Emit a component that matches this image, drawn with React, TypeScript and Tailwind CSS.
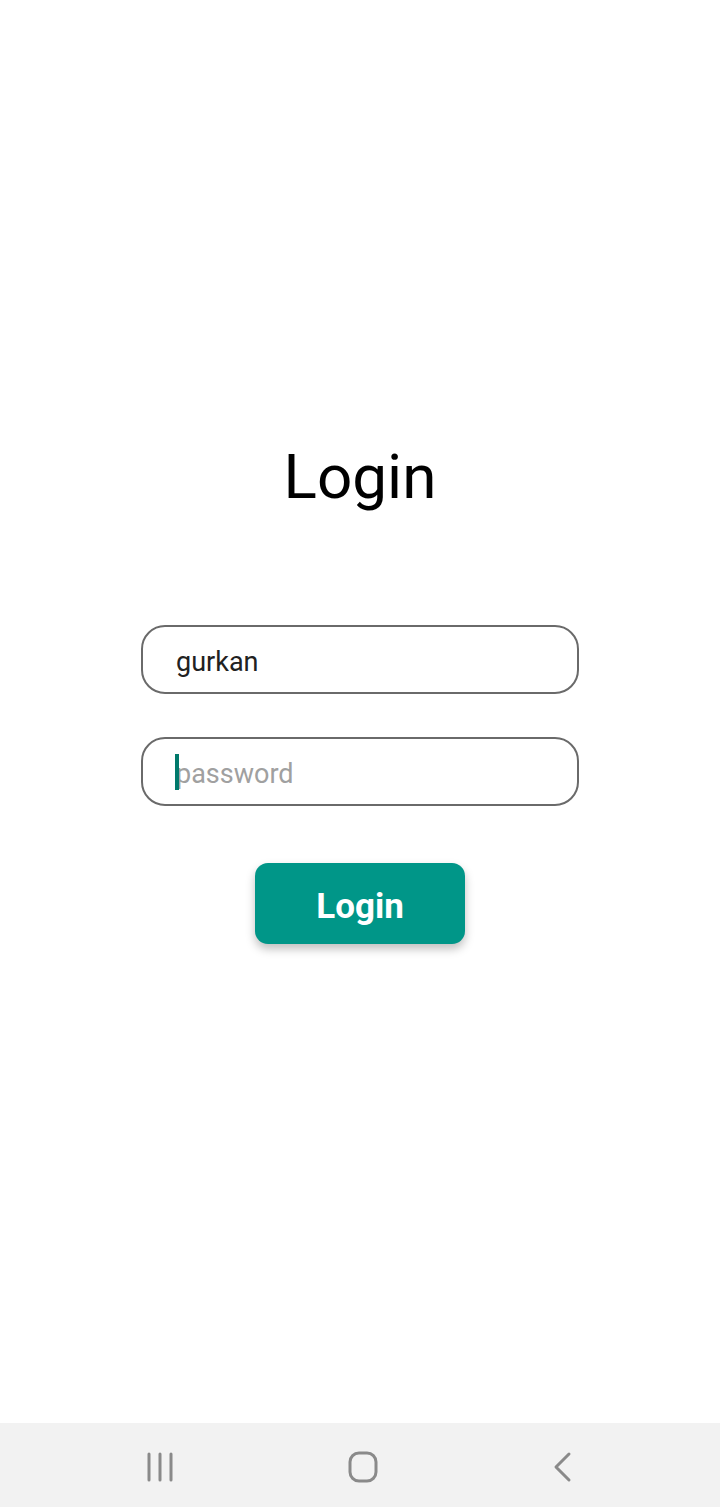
import React from "react";

export default function App() {
  return (
    <div className="flex h-[1507px] w-[720px] flex-col bg-white" style={{ fontFamily: "Roboto, 'Liberation Sans', sans-serif" }}>
      <div className="flex flex-1 flex-col items-center pt-[441px]">
        <h1 className="text-[62px] font-normal leading-[71px] text-black">Login</h1>
        <div className="mt-[113px] flex w-[438px] flex-col gap-[43px]">
          <div className="flex h-[69px] items-center rounded-[24px] border-2 border-[#6a6a6a] pl-[33px] pt-[5px]">
            <span className="text-[27px] leading-none text-[#212121]">gurkan</span>
          </div>
          <div className="relative flex h-[69px] items-center rounded-[24px] border-2 border-[#6a6a6a] pl-[33px] pt-[5px]">
            <span className="text-[27px] leading-none text-[#a0a0a0]">password</span>
            <span className="absolute left-[32px] top-[15px] h-[36px] w-[4px] bg-[#00796b]" />
          </div>
        </div>
        <button className="mt-[57px] flex h-[81px] w-[210px] items-center justify-center rounded-[13px] bg-[#009688] pt-[7px] text-[35px] font-bold text-white shadow-[0_5px_10px_rgba(0,0,0,0.25)]">
          Login
        </button>
      </div>
      <div className="flex h-[84px] items-center justify-between bg-[#f2f2f2] px-[146px] pt-[4px]">
        <svg width="28" height="30" viewBox="0 0 28 30" fill="none" stroke="#8a8a8a" strokeWidth="3" strokeLinecap="round">
          <line x1="3" y1="2" x2="3" y2="28" />
          <line x1="14" y1="2" x2="14" y2="28" />
          <line x1="25" y1="2" x2="25" y2="28" />
        </svg>
        <svg width="30" height="32" viewBox="0 0 30 32" fill="none" stroke="#8a8a8a" strokeWidth="3">
          <rect x="2" y="2" width="26" height="28" rx="9" />
        </svg>
        <svg width="22" height="32" viewBox="0 0 22 32" fill="none" stroke="#8a8a8a" strokeWidth="3" strokeLinecap="round" strokeLinejoin="round">
          <polyline points="17,3 4,16 17,29" />
        </svg>
      </div>
    </div>
  );
}
